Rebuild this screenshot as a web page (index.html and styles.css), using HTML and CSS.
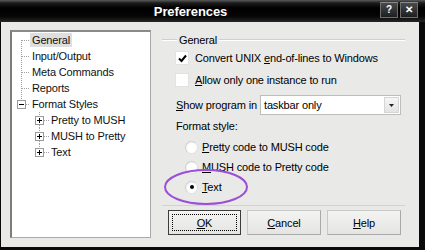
FILE: index.html
```html
<!DOCTYPE html>
<html lang="en">
<head>
  <meta charset="UTF-8" />
  <title>Preferences</title>
  <link rel="stylesheet" href="styles.css">
</head>
<body>
  <div class="window">
    <div class="titlebar">
      <span></span>
      <span class="title">Preferences</span>
      <span class="caption-btns">
        <span class="cbtn">?</span>
        <span class="cbtn">&#x2715;</span>
      </span>
    </div>

    <div class="client">
      <!-- left tree -->
      <div class="tree">
        <div class="node">
          <svg class="gut0" width="18" height="16"><path d="M9.5 8v8M10 8.5h8" /></svg>
          <span class="label sel">General</span>
        </div>
        <div class="node">
          <svg class="gut0" width="18" height="16"><path d="M9.5 0v16M10 8.5h8" /></svg>
          <span class="label">Input/Output</span>
        </div>
        <div class="node">
          <svg class="gut0" width="18" height="16"><path d="M9.5 0v16M10 8.5h8" /></svg>
          <span class="label">Meta Commands</span>
        </div>
        <div class="node">
          <svg class="gut0" width="18" height="16"><path d="M9.5 0v16M10 8.5h8" /></svg>
          <span class="label">Reports</span>
        </div>
        <div class="node">
          <svg class="gut0" width="18" height="16">
            <path d="M9.5 0v4M14 8.5h4" />
            <rect class="box" x="5.5" y="4.5" width="8" height="8" />
            <path class="sign" d="M7 8.5h5" />
          </svg>
          <span class="label">Format Styles</span>
        </div>
        <div class="node">
          <svg class="gut1" width="37" height="16">
            <path d="M27.5 0v4M27.5 13v3M32 8.5h5" />
            <rect class="box" x="23.5" y="4.5" width="8" height="8" />
            <path class="sign" d="M25 8.5h5M27.5 6v5" />
          </svg>
          <span class="label">Pretty to MUSH</span>
        </div>
        <div class="node">
          <svg class="gut1" width="37" height="16">
            <path d="M27.5 0v4M27.5 13v3M32 8.5h5" />
            <rect class="box" x="23.5" y="4.5" width="8" height="8" />
            <path class="sign" d="M25 8.5h5M27.5 6v5" />
          </svg>
          <span class="label">MUSH to Pretty</span>
        </div>
        <div class="node">
          <svg class="gut1" width="37" height="16">
            <path d="M27.5 0v4M32 8.5h5" />
            <rect class="box" x="23.5" y="4.5" width="8" height="8" />
            <path class="sign" d="M25 8.5h5M27.5 6v5" />
          </svg>
          <span class="label">Text</span>
        </div>
      </div>

      <!-- right pane -->
      <div class="pane">
        <div class="group-title"><span>General</span></div>

        <div class="opt check-row">
          <span class="checkbox on">
            <svg width="9" height="9" viewBox="0 0 9 9"><path d="M1 4.5l2.5 2.5L8 1.5" /></svg>
          </span>
          <span>Convert UNIX <u>e</u>nd-of-lines to Windows</span>
        </div>
        <div class="opt check-row">
          <span class="checkbox"></span>
          <span><u>A</u>llow only one instance to run</span>
        </div>

        <div class="show-row">
          <span class="show-label"><u>S</u>how program in</span>
          <div class="select">
            <span class="value">taskbar only</span>
            <span class="drop"><svg width="5" height="3"><path d="M0 0h5L2.5 3z" /></svg></span>
          </div>
        </div>

        <div class="format-label">Format style:</div>

        <div class="radios">
          <div class="opt radio-row">
            <span class="radio"></span>
            <span><u>P</u>retty code to MUSH code</span>
          </div>
          <div class="opt radio-row">
            <span class="radio"></span>
            <span><u>M</u>USH code to Pretty code</span>
          </div>
          <div class="opt radio-row marked">
            <span class="radio on"></span>
            <span><u>T</u>ext</span>
            <svg class="ring" width="86" height="38"><ellipse cx="43" cy="19" rx="41" ry="17" /></svg>
          </div>
        </div>

        <div class="buttons">
          <button class="btn default"><span class="focus"><u>O</u>K</span></button>
          <button class="btn"><u>C</u>ancel</button>
          <button class="btn"><u>H</u>elp</button>
        </div>
      </div>
    </div>
  </div>
</body>
</html>
```

FILE: styles.css
```css
body {
  margin: 0;
  font-family: "Liberation Sans", Arial, sans-serif;
  font-size: 11px;
  letter-spacing: -0.15px;
  color: #000;
}

.window {
  width: 425px;
  height: 250px;
  display: flex;
  flex-direction: column;
  background: #0a0a0a;
}

.titlebar {
  height: 22px;
  display: grid;
  grid-template-columns: 1fr auto 1fr;
  align-items: center;
  background: linear-gradient(#5a5a5a 0, #1c1c1c 3px, #000 8px, #050505 16px, #262626 22px);
  color: #fff;
}

.title {
  font-weight: bold;
  font-size: 13px;
  letter-spacing: -0.1px;
  text-shadow: 0 0 3px #000;
  padding-top: 1px;
  margin-right: 44px;
}

.caption-btns {
  justify-self: end;
  display: flex;
  gap: 2px;
  margin-right: 7px;
  align-self: start;
  margin-top: 2px;
}

.cbtn {
  width: 16px;
  height: 14px;
  border: 1px solid #6d6d6d;
  border-top-color: #8a8a8a;
  background: linear-gradient(#4a4a4a, #1e1e1e);
  color: #fff;
  font-size: 10px;
  font-weight: bold;
  line-height: 14px;
  text-align: center;
}

.client {
  flex: 1;
  margin: 0 6px 3px 1px;
  background: #e9e9e7;
  display: flex;
  padding: 8px 0 9px 9px;
}

/* tree */
.tree {
  width: 138px;
  background: #fff;
  border: 1px solid #a9a9a9;
  border-left: 2px solid #7d7d7d;
  border-top: 2px solid #8a8a8a;
}

.node {
  height: 16px;
  display: flex;
  align-items: center;
}

.node svg {
  flex: none;
}

.node svg path {
  stroke: #a0a0a0;
  stroke-width: 1;
  stroke-dasharray: 1 1;
  fill: none;
}

.node svg .box {
  fill: #fff;
  stroke: #9a9a9a;
}

.node svg .sign {
  stroke: #000;
  stroke-dasharray: none;
}

.label {
  padding: 0 2px;
  line-height: 14px;
  color: #111;
}

.label.sel {
  background: #dedede;
}

/* right pane */
.pane {
  flex: 1;
  display: flex;
  flex-direction: column;
  padding: 3px 14px 0 11px;
}

.group-title {
  height: 14px;
  display: flex;
  align-items: center;
}

.group-title::before,
.group-title::after {
  content: "";
  height: 0;
  border-top: 1px solid #cfcfcd;
  border-bottom: 1px solid #fff;
}

.group-title::before {
  width: 15px;
}

.group-title::after {
  flex: 1;
}

.group-title span {
  padding: 0 2px;
}

.opt {
  display: flex;
  align-items: center;
}

.check-row {
  height: 22px;
  padding-left: 13px;
  gap: 6px;
}

.check-row:first-of-type {
  margin-top: 3px;
}

.checkbox {
  width: 12px;
  height: 12px;
  background: #fff;
  border: 1px solid #e2e2e2;
  display: flex;
  align-items: center;
  justify-content: center;
}

.checkbox svg path {
  fill: none;
  stroke: #000;
  stroke-width: 2;
}

.show-row {
  margin-top: 4px;
  height: 20px;
  display: flex;
  align-items: center;
  padding-left: 14px;
}

.show-label {
  flex: 1;
  white-space: nowrap;
}

.select {
  width: 139px;
  height: 18px;
  margin-right: 4px;
  border: 1px solid #bdbdbd;
  background: #fff;
  display: flex;
  align-items: center;
  justify-content: space-between;
}

.select .value {
  padding-left: 3px;
}

.drop {
  width: 15px;
  height: 16px;
  margin-right: 1px;
  background: linear-gradient(#f6f6f6, #e3e3e3);
  border: 1px solid #d5d5d5;
  box-sizing: border-box;
  display: flex;
  align-items: center;
  justify-content: center;
}

.drop svg path {
  fill: #222;
}

.format-label {
  margin-top: 4px;
  height: 14px;
  line-height: 14px;
  padding-left: 14px;
}

.radios {
  margin-top: 4px;
}

.radio-row {
  height: 20px;
  padding-left: 23px;
  gap: 4px;
}

.marked {
  position: relative;
}

.radio {
  width: 11px;
  height: 11px;
  border-radius: 50%;
  background: radial-gradient(circle at 65% 65%, #fff 45%, #ececec 100%);
  border: 1px solid #e0e0e0;
  border-top-color: #cfcfcf;
  border-left-color: #cfcfcf;
  display: flex;
  align-items: center;
  justify-content: center;
}

.radio.on::after {
  content: "";
  width: 4px;
  height: 4px;
  border-radius: 50%;
  background: #000;
}

.ring {
  position: absolute;
  left: 1px;
  top: -9px;
}

.ring ellipse {
  fill: none;
  stroke: #9a4fd6;
  stroke-width: 2;
}

.buttons {
  margin-top: 8px;
  border-top: 1px solid #d2d2d0;
  padding: 4px 0 0 6px;
  display: flex;
  gap: 6px;
}

.btn {
  width: 74px;
  height: 25px;
  font-family: inherit;
  font-size: 11px;
  letter-spacing: -0.15px;
  color: #000;
  background: linear-gradient(#f4f4f3, #e4e4e2);
  border: 1px solid #c9c9c7;
  border-right-color: #a9a9a7;
  border-bottom-color: #a9a9a7;
  padding: 0;
}

.btn.default {
  width: 73px;
  border: 1px solid #3c3c3c;
  padding: 3px;
}

.focus {
  display: flex;
  height: 100%;
  align-items: center;
  justify-content: center;
  border: 1px dotted #000;
  box-sizing: border-box;
}
```
